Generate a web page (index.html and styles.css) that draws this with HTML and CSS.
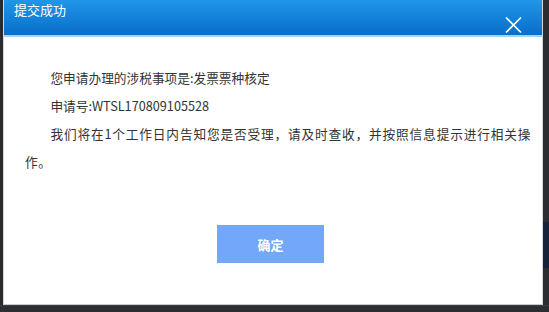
FILE: index.html
```html
<!DOCTYPE html>
<html lang="zh-CN">
<head>
<meta charset="utf-8">
<title>提交成功</title>
<link rel="stylesheet" href="styles.css">
</head>
<body>
<div class="page">
  <div class="screen">
    <div class="strip-left"></div>
    <div class="dialog">
      <div class="dialog-header">
        <span class="dialog-title">提交成功</span>
        <span class="dialog-close" aria-label="关闭">
          <svg width="17" height="16" viewBox="0 0 17 16"><path d="M1 0.5 L16 15.5 M16 0.5 L1 15.5" stroke="#ffffff" stroke-width="1.6" fill="none"/></svg>
        </span>
      </div>
      <div class="dialog-body">
        <p class="msg">您申请办理的涉税事项是:发票票种核定</p>
        <p class="msg">申请号:WTSL170809105528</p>
        <p class="msg msg-long">我们将在1个工作日内告知您是否受理，请及时查收，并按照信息提示进行相关操作。</p>
      </div>
      <div class="dialog-footer">
        <button class="btn-ok">确定</button>
      </div>
    </div>
    <div class="strip-right"></div>
  </div>
  <div class="strip-bottom"></div>
</div>
</body>
</html>
```
FILE: styles.css
```css
html, body {
  margin: 0;
  padding: 0;
  background: #2b2d30;
}
body {
  width: 549px;
  height: 312px;
  overflow: hidden;
  font-family: "Noto Sans CJK SC", "Noto Sans", sans-serif;
}
.page {
  display: flex;
  flex-direction: column;
  height: 312px;
}
.screen {
  display: flex;
  height: 305px;
  flex: none;
}
.strip-left {
  width: 3px;
  background: #2a2b2d;
}
.strip-right {
  width: 6px;
  background: linear-gradient(to bottom, #2b2d30 0, #2b2d30 222px, #16213a 222px, #16213a 268px, #2b2d30 268px);
}
.strip-bottom {
  height: 7px;
  flex: none;
  background: #2c2e31;
  border-top: 1px solid #3a3c3f;
  box-sizing: border-box;
}
.dialog {
  box-sizing: border-box;
  width: 540px;
  height: 305px;
  background: #ffffff;
  border-left: 1px solid #d4d6d8;
  border-right: 1px solid #d4d6d8;
  border-bottom: 1px solid #c9cbcd;
  display: flex;
  flex-direction: column;
  overflow: hidden;
}
.dialog-header {
  height: 35px;
  flex: none;
  border-bottom: 2px solid #a3d4f6;
  background: linear-gradient(to bottom, #2196e8 0%, #1584dc 45%, #0a6ec8 100%);
  display: flex;
  justify-content: space-between;
  align-items: flex-start;
  padding: 0 20px 0 10px;
}
.dialog-title {
  color: #ffffff;
  font-size: 13px;
  line-height: 20px;
}
.dialog-close {
  margin-top: 17px;
  display: flex;
}
.dialog-body {
  padding: 27px 11px 0 21px;
  color: #333333;
  font-size: 12.7px;
  line-height: 28px;
}
.msg {
  margin: 0;
  text-indent: 2em;
  text-align: justify;
}
.msg-long {
  letter-spacing: 0.6px;
}
.dialog-footer {
  display: flex;
  justify-content: center;
  padding: 49px 5px 0 0;
}
.btn-ok {
  width: 107px;
  height: 38px;
  border: none;
  background: #73a7f8;
  color: #ffffff;
  font-family: "Noto Sans CJK SC", sans-serif;
  font-size: 13px;
  font-weight: bold;
  padding: 0;
}
```
